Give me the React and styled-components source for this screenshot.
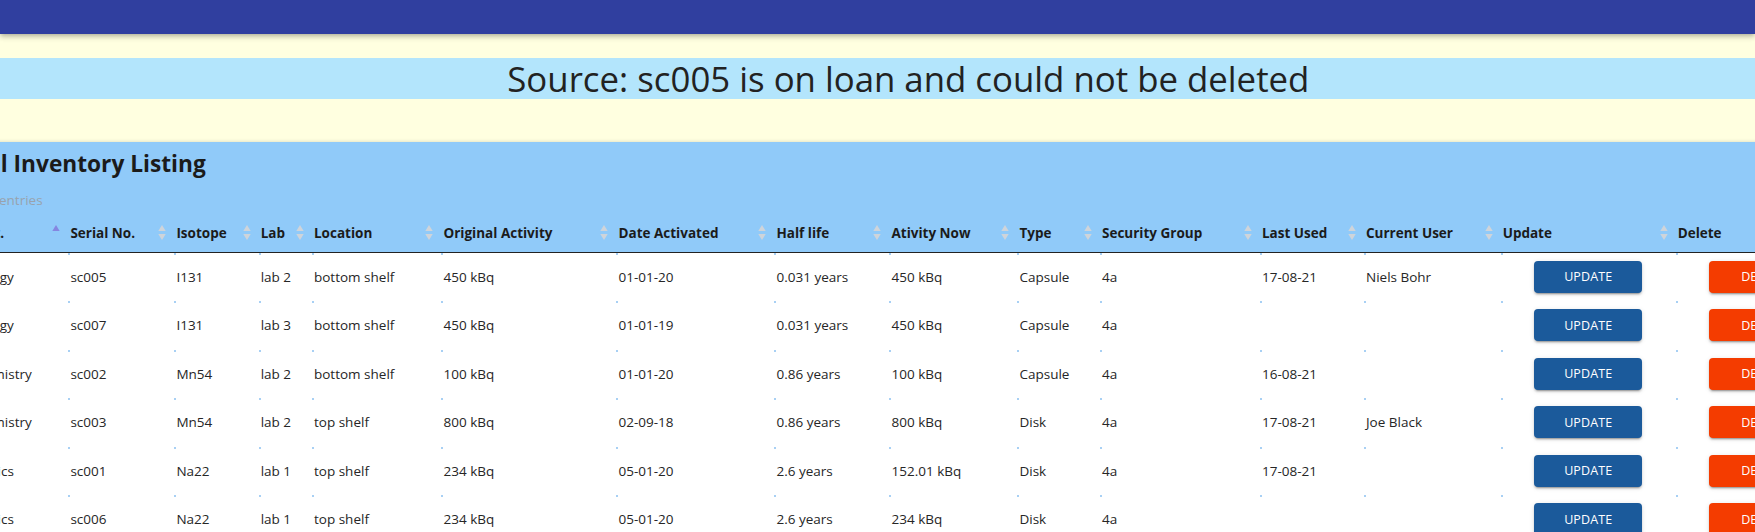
import { useLayoutEffect, useRef } from 'react'
import styled, { createGlobalStyle } from 'styled-components'

// how far the page is scrolled sideways in the screenshot
const SCROLL_X = 58

const columns = [
  { key: 'dept', label: 'Dept.', width: 102.4 },
  { key: 'serial', label: 'Serial No.', width: 106 },
  { key: 'isotope', label: 'Isotope', width: 84.3 },
  { key: 'lab', label: 'Lab', width: 53.3 },
  { key: 'location', label: 'Location', width: 129.5 },
  { key: 'original', label: 'Original Activity', width: 175 },
  { key: 'activated', label: 'Date Activated', width: 158 },
  { key: 'halfLife', label: 'Half life', width: 115 },
  { key: 'now', label: 'Ativity Now', width: 128 },
  { key: 'type', label: 'Type', width: 82.5 },
  { key: 'group', label: 'Security Group', width: 160 },
  { key: 'lastUsed', label: 'Last Used', width: 104 },
  { key: 'user', label: 'Current User', width: 136.7 },
  { key: 'update', label: 'Update', width: 175 },
  { key: 'delete', label: 'Delete', width: 175 }
]

const sources = [
  { dept: 'Biology', serial: 'sc005', isotope: 'I131', lab: 'lab 2', location: 'bottom shelf', original: '450 kBq', activated: '01-01-20', halfLife: '0.031 years', now: '450 kBq', type: 'Capsule', group: '4a', lastUsed: '17-08-21', user: 'Niels Bohr' },
  { dept: 'Biology', serial: 'sc007', isotope: 'I131', lab: 'lab 3', location: 'bottom shelf', original: '450 kBq', activated: '01-01-19', halfLife: '0.031 years', now: '450 kBq', type: 'Capsule', group: '4a', lastUsed: '', user: '' },
  { dept: 'Chemistry', serial: 'sc002', isotope: 'Mn54', lab: 'lab 2', location: 'bottom shelf', original: '100 kBq', activated: '01-01-20', halfLife: '0.86 years', now: '100 kBq', type: 'Capsule', group: '4a', lastUsed: '16-08-21', user: '' },
  { dept: 'Chemistry', serial: 'sc003', isotope: 'Mn54', lab: 'lab 2', location: 'top shelf', original: '800 kBq', activated: '02-09-18', halfLife: '0.86 years', now: '800 kBq', type: 'Disk', group: '4a', lastUsed: '17-08-21', user: 'Joe Black' },
  { dept: 'Physics', serial: 'sc001', isotope: 'Na22', lab: 'lab 1', location: 'top shelf', original: '234 kBq', activated: '05-01-20', halfLife: '2.6 years', now: '152.01 kBq', type: 'Disk', group: '4a', lastUsed: '17-08-21', user: '' },
  { dept: 'Physics', serial: 'sc006', isotope: 'Na22', lab: 'lab 1', location: 'top shelf', original: '234 kBq', activated: '05-01-20', halfLife: '2.6 years', now: '234 kBq', type: 'Disk', group: '4a', lastUsed: '', user: '' }
]

const tableWidth = columns.reduce((sum, c) => sum + c.width, 0)

//#region Styled components
const GlobalStyle = createGlobalStyle`
  html, body {
    margin: 0;
    padding: 0;
    overflow: hidden;
  }
  body {
    font-family: "Open Sans", "Noto Sans", sans-serif;
    color: #262626;
    background: #fff;
  }
`
const Page = styled.div`
  display: flex;
  flex-direction: column;
  height: 100vh;
`
const AppBar = styled.header`
  flex-shrink: 0;
  height: 34px;
  background: #303f9f;
  position: relative;
  z-index: 2;
  box-shadow: 0 2px 4px -1px rgba(0, 0, 0, 0.2), 0 4px 5px 0 rgba(0, 0, 0, 0.1), 0 1px 8px 0 rgba(0, 0, 0, 0.08);
`
const Scroller = styled.div`
  flex: 1;
  overflow: hidden;
`
const Sheet = styled.main`
  width: max-content;
  min-width: 100%;
`
const Notice = styled.section`
  background: #ffffe0;
  padding: 24px 0 43px;
`
const AlertText = styled.h4`
  margin: 0;
  padding-top: 2px;
  background: #b3e5fc;
  font-size: 34.8px;
  font-weight: 400;
  line-height: 38.5px;
  text-align: center;
  color: #222;
`
const Panel = styled.section`
  background: #90caf9;
  padding: 9px 8px 0;
  box-shadow: 0 -1px 3px rgba(0, 0, 0, 0.1);
  position: relative;
`
const Title = styled.h2`
  margin: 0;
  font-size: 22.7px;
  font-weight: 700;
  line-height: 26px;
  color: #1b1b1b;
`
const Subtitle = styled.div`
  margin-top: 13px;
  font-size: 13.5px;
  line-height: 20px;
  color: #98a3ae;
`
const TableWrap = styled.div`
  margin: 4px 16px 0;
`
const Table = styled.table`
  border-collapse: collapse;
  table-layout: fixed;
  font-size: 13.5px;
`
const HeadCell = styled.th`
  height: 38px;
  padding: 0 2px;
  text-align: left;
  font-weight: 700;
  color: #1b1b1b;
  border-bottom: 1px solid #222;
  white-space: nowrap;
`
const HeadInner = styled.div`
  display: flex;
  align-items: center;
  justify-content: space-between;
  padding-right: 6px;
`
const SortMark = styled.svg`
  flex-shrink: 0;
  display: block;
`
const Cell = styled.td`
  height: 48.5px;
  padding: 0 2px;
  vertical-align: middle;
  white-space: nowrap;
  text-align: ${({ $center }) => ($center ? 'center' : 'left')};
  background: #fff linear-gradient(#a8d0f4, #a8d0f4) no-repeat 0 0 / 2px 2px;
`
const ActionButton = styled.button`
  width: 108px;
  height: 32px;
  border: 0;
  border-radius: 4px;
  background: ${({ $tone }) => ($tone === 'danger' ? '#f43c00' : '#1b5a9b')};
  color: #fff;
  font-family: inherit;
  font-size: 12.5px;
  font-weight: 500;
  letter-spacing: 0.1px;
  text-transform: uppercase;
  box-shadow: 0 3px 1px -2px rgba(0, 0, 0, 0.2), 0 2px 2px 0 rgba(0, 0, 0, 0.14), 0 1px 5px 0 rgba(0, 0, 0, 0.12);
  cursor: pointer;
`
// #endregion

const SortIcon = ({ active }) => (
  <SortMark width="8" height="15" viewBox="0 0 8 15">
    <path d="M4 0 L7.7 6 H0.3 Z" fill={active ? '#8586e0' : '#cfd4da'} />
    {!active && <path d="M0.3 9 H7.7 L4 15 Z" fill="#cfd4da" />}
  </SortMark>
)

const App = function () {
  const scroller = useRef(null)

  useLayoutEffect(() => {
    scroller.current.scrollLeft = SCROLL_X
  }, [])

  return (
    <>
      <GlobalStyle />
      <Page>
        <AppBar />
        <Scroller ref={ scroller }>
          <Sheet>
            <Notice>
              <AlertText>Source: sc005 is on loan and could not be deleted</AlertText>
            </Notice>
            <Panel>
              <Title>Total Inventory Listing</Title>
              <Subtitle>Show 6 entries</Subtitle>
              <TableWrap>
                <Table style={{ width: tableWidth }}>
                  <colgroup>
                    { columns.map((c) => <col key={ c.key } style={{ width: c.width }} />) }
                  </colgroup>
                  <thead>
                    <tr>
                      { columns.map((c, i) => (
                        <HeadCell key={ c.key }>
                          <HeadInner>
                            <span>{ c.label }</span>
                            <SortIcon active={ i === 0 } />
                          </HeadInner>
                        </HeadCell>
                      )) }
                    </tr>
                  </thead>
                  <tbody>
                    { sources.map((s) => (
                      <tr key={ s.serial }>
                        { columns.slice(0, 13).map((c) => (
                          <Cell key={ c.key }>{ s[c.key] }</Cell>
                        )) }
                        <Cell $center>
                          <ActionButton>Update</ActionButton>
                        </Cell>
                        <Cell $center>
                          <ActionButton $tone="danger">Delete</ActionButton>
                        </Cell>
                      </tr>
                    )) }
                  </tbody>
                </Table>
              </TableWrap>
            </Panel>
          </Sheet>
        </Scroller>
      </Page>
    </>
  )
}

export default App
